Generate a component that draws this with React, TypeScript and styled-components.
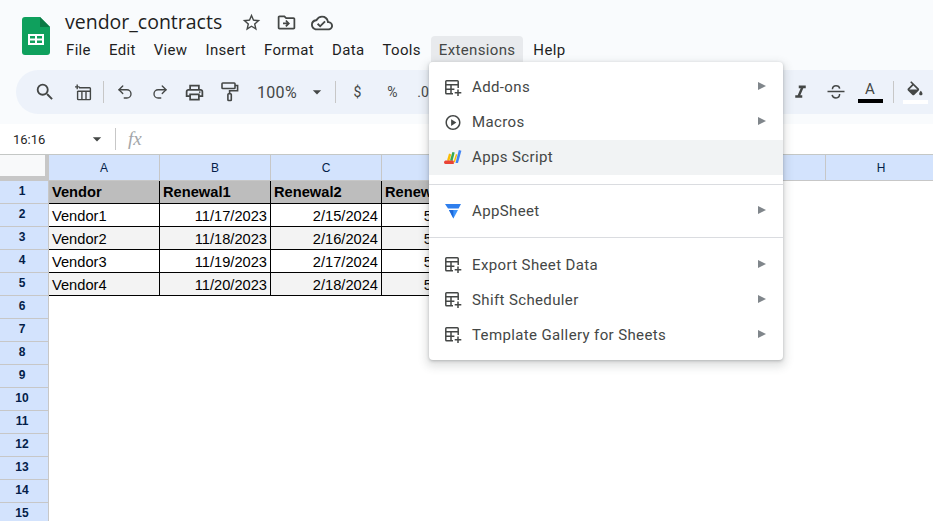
import React from 'react';
import styled, { createGlobalStyle } from 'styled-components';
import { Undo2, Redo2 } from 'lucide-react';
import {
  MdSearch,
  MdStarBorder,
  MdOutlineDriveFileMove,
  MdOutlineCloudDone,
  MdOutlineLocalPrintshop,
  MdArrowDropDown,
  MdFormatItalic,
  MdOutlinePlayCircle,
} from 'react-icons/md';

const GlobalStyle = createGlobalStyle`
  html, body {
    margin: 0;
    padding: 0;
    height: 100%;
    overflow: hidden;
    background: #fff;
  }
`;

const Page = styled.div`
  position: relative;
  width: 933px;
  height: 521px;
  overflow: hidden;
  font-family: Roboto, 'Liberation Sans', sans-serif;
  color: #444746;
`;

const Top = styled.div`
  background: #f9fbfd;
  height: 124px;
  display: flex;
  flex-direction: column;
`;

const TitleArea = styled.div`
  display: flex;
  height: 70px;
  padding-left: 22px;
`;

const LogoBox = styled.div`
  width: 36px;
  padding-top: 17px;
`;

const TitleColumn = styled.div`
  display: flex;
  flex-direction: column;
`;

const TitleRow = styled.div`
  display: flex;
  align-items: center;
  height: 25px;
  margin-top: 9px;
  padding-left: 7px;
`;

const Title = styled.div`
  font-family: 'Open Sans', sans-serif;
  font-size: 19.5px;
  color: #1f1f1f;
  width: 176px;
`;

const TitleIcons = styled.div`
  display: flex;
  align-items: center;
  gap: 14px;
  color: #444746;
  margin-top: 2px;
`;

const MenuBar = styled.div`
  display: flex;
  margin-top: 2px;
`;

const MenuLabel = styled.div<{ $open?: boolean }>`
  padding: 0 8px;
  height: 26px;
  line-height: 28px;
  font-size: 15px;
  letter-spacing: 0.34px;
  color: ${({ $open }) => ($open ? '#444746' : '#1f1f1f')};
  border-radius: 4px 4px 0 0;
  margin-right: 2px;
  background: ${({ $open }) => ($open ? '#e8eaed' : 'transparent')};
`;

const Toolbar = styled.div`
  height: 44px;
  margin-left: 16px;
  padding-left: 17px;
  background: #edf2fa;
  border-radius: 22px 0 0 22px;
  display: flex;
  align-items: center;
  justify-content: space-between;
  color: #444746;
`;

const ToolGroup = styled.div`
  display: flex;
  align-items: center;
`;

const ToolIcon = styled.div<{ $w?: number; $ml?: number }>`
  width: ${({ $w }) => $w ?? 35}px;
  margin-left: ${({ $ml }) => $ml ?? 0}px;
  height: 24px;
  display: flex;
  align-items: center;
  justify-content: center;
  flex: none;
`;

const ToolSep = styled.div<{ $ml: number; $mr: number }>`
  width: 1px;
  height: 22px;
  background: #c7c7c7;
  flex: none;
  margin-left: ${({ $ml }) => $ml}px;
  margin-right: ${({ $mr }) => $mr}px;
`;

const ZoomText = styled.div`
  font-size: 16px;
  letter-spacing: 0.3px;
  color: #444746;
  width: 50px;
  padding-left: 10px;
`;

const ToolText = styled.div<{ $w?: number }>`
  width: ${({ $w }) => $w ?? 35}px;
  text-align: center;
  font-size: 14px;
  color: #444746;
  flex: none;
`;

const ColorA = styled.div<{ $bar: string }>`
  width: 34px;
  display: flex;
  flex-direction: column;
  align-items: center;
  font-size: 15px;
  line-height: 15px;
  color: #444746;
  &::after {
    content: '';
    display: block;
    width: 25px;
    height: 4px;
    margin-top: 2px;
    background: ${({ $bar }) => $bar};
  }
`;

const FillColumn = styled.div`
  width: 36px;
  display: flex;
  flex-direction: column;
  align-items: center;
  &::after {
    content: '';
    display: block;
    width: 25px;
    height: 4px;
    margin-top: 2px;
    background: #fff;
  }
`;

const FormulaBar = styled.div`
  height: 30px;
  background: #fff;
  display: flex;
  align-items: center;
  border-bottom: 1px solid #c4c7c5;
`;

const CellName = styled.div`
  width: 74px;
  padding-left: 13px;
  font-size: 13px;
  color: #1f1f1f;
`;

const FxLabel = styled.div`
  font-family: 'Liberation Serif', serif;
  font-style: italic;
  font-size: 19px;
  color: #a3a6a9;
`;

const SheetGrid = styled.div`
  display: grid;
  grid-template-columns: 49px repeat(8, 111px);
  grid-template-rows: 26px;
  grid-auto-rows: 23px;
  width: 937px;
  font-family: 'Liberation Sans', Arial, sans-serif;
`;

const Corner = styled.div`
  box-sizing: border-box;
  background: #f8f9fa;
  border-right: 4px solid #c7c7c7;
  border-bottom: 5px solid #c7c7c7;
`;

const ColHead = styled.div`
  box-sizing: border-box;
  background: #d3e3fd;
  border-right: 1px solid #c7c7c7;
  border-bottom: 1px solid #c7c7c7;
  display: flex;
  align-items: center;
  justify-content: center;
  font-size: 12px;
  color: #041e49;
`;

const RowHead = styled.div`
  box-sizing: border-box;
  background: #d3e3fd;
  border-right: 1px solid #c7c7c7;
  border-bottom: 1px solid #c7c7c7;
  display: flex;
  align-items: center;
  justify-content: center;
  padding: 0 4px 2px 0;
  font-size: 12px;
  font-weight: 700;
  color: #041e49;
`;

const Cell = styled.div<{ $variant: 'head' | 'odd' | 'even'; $right?: boolean }>`
  box-sizing: border-box;
  border-right: 1px solid #000;
  border-bottom: 1px solid #000;
  padding: 0 3px;
  font-size: 14.67px;
  line-height: ${({ $variant }) => ($variant === 'head' ? 23 : 25)}px;
  white-space: nowrap;
  overflow: hidden;
  color: #000;
  text-align: ${({ $right }) => ($right ? 'right' : 'left')};
  font-weight: ${({ $variant }) => ($variant === 'head' ? 700 : 400)};
  background: ${({ $variant }) =>
    $variant === 'head' ? '#bdbdbd' : $variant === 'even' ? '#f3f3f3' : '#fff'};
`;

const BlankCell = styled.div``;

const DropMenu = styled.div`
  position: absolute;
  left: 429px;
  top: 62px;
  width: 354px;
  box-sizing: border-box;
  padding: 8px 0 7.5px;
  background: #fff;
  border-radius: 4px;
  box-shadow: 0 1px 3px rgba(60, 64, 67, 0.3), 0 4px 8px 3px rgba(60, 64, 67, 0.15);
`;

const MenuItem = styled.div<{ $hover?: boolean }>`
  height: 35px;
  display: flex;
  align-items: center;
  padding: 0 16px 0 15px;
  background: ${({ $hover }) => ($hover ? '#f1f3f4' : 'transparent')};
`;

const ItemIcon = styled.div`
  width: 18px;
  height: 18px;
  margin-right: 10px;
  display: flex;
  align-items: center;
  justify-content: center;
  color: #444746;
`;

const ItemLabel = styled.div`
  flex: 1;
  font-size: 15px;
  letter-spacing: 0.37px;
  color: #444746;
  margin-top: -1px;
`;

const Arrow = styled.div`
  width: 0;
  height: 0;
  margin-right: 1px;
  margin-top: -3px;
  border-left: 8px solid #80868b;
  border-top: 4px solid transparent;
  border-bottom: 4px solid transparent;
`;

const Divider = styled.div<{ $mb: number }>`
  height: 1px;
  margin: 8.5px 0 ${({ $mb }) => $mb}px;
  background: #dadce0;
`;

const SheetsLogo = () => (
  <svg width="28" height="38" viewBox="0 0 28 38">
    <path d="M18 0H3a3 3 0 0 0-3 3v32a3 3 0 0 0 3 3h22a3 3 0 0 0 3-3V10z" fill="#0fa05d" />
    <path d="M18 0l10 10H18z" fill="#0b7a45" />
    <path d="M6 17h16v11H6zM8 19v2.5h5V19zm7 0v2.5h5V19zM8 23.5V26h5v-2.5zm7 0V26h5v-2.5z" fill="#fff" fillRule="evenodd" />
  </svg>
);

const AddTableIcon = () => (
  <svg width="17" height="17" viewBox="0 0 17 17" fill="none" stroke="currentColor" strokeWidth="1.4">
    <path d="M4 3.7h10.6a.8.8 0 0 1 .8.8v10.3a.8.8 0 0 1-.8.8H3.4a.8.8 0 0 1-.8-.8V7" />
    <path d="M2.6 7.3h12.8M6.9 7.3v8.3M11 7.3v8.3" />
    <path d="M2.2 0.6v4.6M0 2.9h4.6" />
  </svg>
);

const PaintFormatIcon = () => (
  <svg width="18" height="20" viewBox="0 0 18 20" fill="none" stroke="currentColor" strokeWidth="1.6">
    <rect x="1" y="1" width="13" height="5.5" rx="0.8" />
    <path d="M14 3.5h2.6v5.2H8.6v3" />
    <rect x="6.9" y="11.7" width="3.4" height="6.8" rx="0.7" />
  </svg>
);

const StrikeIcon = () => (
  <svg width="18" height="18" viewBox="0 0 18 18" fill="none" stroke="currentColor" strokeWidth="1.5">
    <path d="M0.5 8.5h17" />
    <path d="M5.4 6.2C5.6 3.8 7 2.8 9 2.8s3.4.9 3.7 2.8" />
    <path d="M12.6 11c0 2.4-1.5 3.9-3.6 3.9-2.2 0-3.6-1.2-3.9-3" />
  </svg>
);

const FillBucketIcon = () => (
  <svg width="20" height="17" viewBox="0 0 24 20" fill="currentColor">
    <path d="M16.56 8.94L7.62 0 6.21 1.41l2.38 2.38-5.15 5.15c-.59.59-.59 1.54 0 2.12l5.5 5.5c.29.29.68.44 1.06.44s.77-.15 1.06-.44l5.5-5.5c.59-.58.59-1.53 0-2.12zM5.21 10L10 5.21 14.79 10H5.21zM19 11.5s-2 2.17-2 3.5c0 1.1.9 2 2 2s2-.9 2-2c0-1.33-2-3.5-2-3.5z" />
  </svg>
);

const AddonIcon = () => (
  <svg width="18" height="18" viewBox="0 0 18 18" fill="none" stroke="currentColor" strokeWidth="1.5">
    <path d="M9 14.8H2.6a.8.8 0 0 1-.8-.8V2.6a.8.8 0 0 1 .8-.8h10.8a.8.8 0 0 1 .8.8v6.4" />
    <path d="M1.8 5.8h12.4M1.8 10.2h8.6M7 5.8v9" />
    <path d="M14 10.5v6.6M10.7 13.8h6.6" />
  </svg>
);

const AppsScriptIcon = () => (
  <svg width="18" height="15" viewBox="0 0 18 15">
    <path d="M3 10.5L5 3.6l2.3.9-2 6.5z" fill="#fbbc04" />
    <path d="M6 10.5L8.4 2l2.3.6-2.2 8.5z" fill="#34a853" />
    <path d="M9.5 12l2.4-8 1.4.4-2.4 8z" fill="#fbbc04" />
    <path d="M11.5 13l3.3-13 2.6.7-3.4 12.4z" fill="#4285f4" />
    <path d="M1.4 10.6h7.4a1 1 0 0 1 1 1V14H1.4A1.4 1.4 0 0 1 0 12.6 2 2 0 0 1 1.4 10.6z" fill="#ea4335" />
  </svg>
);

const AppSheetIcon = () => (
  <svg width="16" height="15" viewBox="0 0 16 15">
    <path d="M0 0h16l-2.4 4.6H3z" fill="#2f7fed" />
    <path d="M4 6h9l-4.6 8.6z" fill="#3b93fb" />
    <path d="M4 6h4.3l.1 8.6z" fill="#1d68d8" />
  </svg>
);

const columns = ['A', 'B', 'C', '', '', '', '', 'H'];
const headerCells = ['Vendor', 'Renewal1', 'Renewal2', 'Renewal3'];
const rows = [
  ['Vendor1', '11/17/2023', '2/15/2024', '5/15/2024'],
  ['Vendor2', '11/18/2023', '2/16/2024', '5/16/2024'],
  ['Vendor3', '11/19/2023', '2/17/2024', '5/17/2024'],
  ['Vendor4', '11/20/2023', '2/18/2024', '5/18/2024'],
];
const menuNames = ['File', 'Edit', 'View', 'Insert', 'Format', 'Data', 'Tools', 'Extensions', 'Help'];

const App = () => (
  <Page>
    <GlobalStyle />
    <Top>
      <TitleArea>
        <LogoBox>
          <SheetsLogo />
        </LogoBox>
        <TitleColumn>
          <TitleRow>
            <Title>vendor_contracts</Title>
            <TitleIcons>
              <MdStarBorder size={21} />
              <MdOutlineDriveFileMove size={21} />
              <MdOutlineCloudDone size={22} />
            </TitleIcons>
          </TitleRow>
          <MenuBar>
            {menuNames.map((name) => (
              <MenuLabel key={name} $open={name === 'Extensions'}>
                {name}
              </MenuLabel>
            ))}
          </MenuBar>
        </TitleColumn>
      </TitleArea>
      <Toolbar>
        <ToolGroup>
          <ToolIcon $w={24}><MdSearch size={22} /></ToolIcon>
          <ToolIcon $w={36} $ml={8}><AddTableIcon /></ToolIcon>
          <ToolSep $ml={2} $mr={3} />
          <ToolIcon><Undo2 size={18} strokeWidth={1.8} /></ToolIcon>
          <ToolIcon><Redo2 size={18} strokeWidth={1.8} /></ToolIcon>
          <ToolIcon><MdOutlineLocalPrintshop size={21} /></ToolIcon>
          <ToolIcon><PaintFormatIcon /></ToolIcon>
          <ZoomText>100%</ZoomText>
          <ToolIcon $w={20}><MdArrowDropDown size={22} /></ToolIcon>
          <ToolSep $ml={8} $mr={4} />
          <ToolText>$</ToolText>
          <ToolText>%</ToolText>
          <ToolText $w={26}>.0</ToolText>
        </ToolGroup>
        <ToolGroup>
          <ToolIcon><MdFormatItalic size={21} /></ToolIcon>
          <ToolIcon><StrikeIcon /></ToolIcon>
          <ColorA $bar="#000">A</ColorA>
          <ToolSep $ml={6} $mr={3} />
          <FillColumn><FillBucketIcon /></FillColumn>
        </ToolGroup>
      </Toolbar>
    </Top>
    <FormulaBar>
      <CellName>16:16</CellName>
      <MdArrowDropDown size={20} color="#444746" />
      <ToolSep $ml={8} $mr={12} />
      <FxLabel>fx</FxLabel>
    </FormulaBar>
    <SheetGrid>
      <Corner />
      {columns.map((col, i) => (
        <ColHead key={i}>{col}</ColHead>
      ))}
      {Array.from({ length: 15 }, (_, r) => {
        const data = r === 0 ? headerCells : rows[r - 1];
        return (
          <React.Fragment key={r}>
            <RowHead>{r + 1}</RowHead>
            {Array.from({ length: 8 }, (_, c) =>
              data && data[c] ? (
                <Cell
                  key={c}
                  $variant={r === 0 ? 'head' : r % 2 === 1 ? 'odd' : 'even'}
                  $right={r > 0 && c > 0}
                >
                  {data[c]}
                </Cell>
              ) : (
                <BlankCell key={c} />
              )
            )}
          </React.Fragment>
        );
      })}
    </SheetGrid>
    <DropMenu>
      <MenuItem>
        <ItemIcon><AddonIcon /></ItemIcon>
        <ItemLabel>Add-ons</ItemLabel>
        <Arrow />
      </MenuItem>
      <MenuItem>
        <ItemIcon><MdOutlinePlayCircle size={21} /></ItemIcon>
        <ItemLabel>Macros</ItemLabel>
        <Arrow />
      </MenuItem>
      <MenuItem $hover>
        <ItemIcon><AppsScriptIcon /></ItemIcon>
        <ItemLabel>Apps Script</ItemLabel>
      </MenuItem>
      <Divider $mb={9} />
      <MenuItem>
        <ItemIcon><AppSheetIcon /></ItemIcon>
        <ItemLabel>AppSheet</ItemLabel>
        <Arrow />
      </MenuItem>
      <Divider $mb={9.5} />
      <MenuItem>
        <ItemIcon><AddonIcon /></ItemIcon>
        <ItemLabel>Export Sheet Data</ItemLabel>
        <Arrow />
      </MenuItem>
      <MenuItem>
        <ItemIcon><AddonIcon /></ItemIcon>
        <ItemLabel>Shift Scheduler</ItemLabel>
        <Arrow />
      </MenuItem>
      <MenuItem>
        <ItemIcon><AddonIcon /></ItemIcon>
        <ItemLabel>Template Gallery for Sheets</ItemLabel>
        <Arrow />
      </MenuItem>
    </DropMenu>
  </Page>
);

export default App;
